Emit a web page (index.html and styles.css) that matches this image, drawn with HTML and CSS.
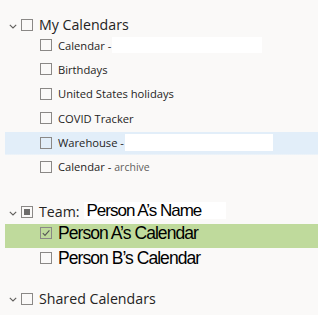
FILE: index.html
```html
<!DOCTYPE html>
<html>
<head>
<meta charset="utf-8">
<link rel="stylesheet" href="styles.css">
</head>
<body>
<div class="tree">
  <div class="group-row first">
    <svg class="chev" width="8" height="5" viewBox="0 0 8 5"><path d="M0.8 0.8 L4 4 L7.2 0.8" fill="none" stroke="#605e5c" stroke-width="1.1"/></svg>
    <span class="cb"></span>
    <span class="group-label">My Calendars</span>
  </div>
  <div class="items">
    <div class="item"><span class="cb"></span><span class="label">Calendar -</span><span class="mask mask-cal"></span></div>
    <div class="item"><span class="cb"></span><span class="label">Birthdays</span></div>
    <div class="item"><span class="cb"></span><span class="label">United States holidays</span></div>
    <div class="item"><span class="cb"></span><span class="label">COVID Tracker</span></div>
    <div class="item selected"><span class="cb"></span><span class="label">Warehouse -</span><span class="mask mask-wh"></span></div>
    <div class="item"><span class="cb"></span><span class="label">Calendar - <span class="sub">archive</span></span></div>
  </div>

  <div class="group-row team">
    <svg class="chev" width="8" height="5" viewBox="0 0 8 5"><path d="M0.8 0.8 L4 4 L7.2 0.8" fill="none" stroke="#605e5c" stroke-width="1.1"/></svg>
    <span class="cb partial"><span class="fill"></span></span>
    <span class="group-label">Team:</span>
    <span class="name-box">Person A’s Name</span>
  </div>
  <div class="person checked-row">
    <span class="cb"><svg width="10" height="10" viewBox="0 0 10 10"><path d="M1.8 5.2 L4 7.4 L8.4 2.4" fill="none" stroke="#555" stroke-width="1.1"/></svg></span>
    <span class="person-label">Person A’s Calendar</span>
  </div>
  <div class="person">
    <span class="cb"></span>
    <span class="person-label">Person B’s Calendar</span>
  </div>

  <div class="group-row shared">
    <svg class="chev" width="8" height="5" viewBox="0 0 8 5"><path d="M0.8 0.8 L4 4 L7.2 0.8" fill="none" stroke="#605e5c" stroke-width="1.1"/></svg>
    <span class="cb"></span>
    <span class="group-label">Shared Calendars</span>
  </div>
</div>
</body>
</html>
```
FILE: styles.css
```css
html, body {
  margin: 0;
  padding: 0;
  background: #faf9f8;
  width: 318px;
  height: 315px;
  overflow: hidden;
}
.tree {
  font-family: "Open Sans", "Noto Sans", sans-serif;
  color: #252423;
  display: flex;
  flex-direction: column;
}
.group-row {
  height: 16px;
  display: flex;
  align-items: center;
  padding-left: 9px;
}
.group-row.first { margin-top: 17px; }
.group-row.team { margin-top: 25.3px; }
.group-row.shared { margin-top: 23px; }
.chev {
  flex: none;
  margin-right: 4px;
  margin-top: 2px;
}
.cb {
  flex: none;
  width: 12px;
  height: 12px;
  box-sizing: border-box;
  border: 1px solid #8a8886;
  display: flex;
  align-items: center;
  justify-content: center;
}
.cb.partial .fill {
  width: 6px;
  height: 6px;
  background: #6e6d6c;
}
.group-label {
  margin-left: 6px;
  font-size: 14.2px;
  line-height: 16px;
  white-space: nowrap;
}
.items {
  margin-top: -0.2px;
  display: flex;
  flex-direction: column;
}
.item {
  height: 24.4px;
  margin-left: 5px;
  padding-left: 35px;
  display: flex;
  align-items: center;
  box-sizing: border-box;
}
.item.selected {
  background: linear-gradient(#e2eef9, #e2eef9) 0 1.2px / 100% calc(100% - 2.4px) no-repeat;
}
.label {
  margin-left: 6px;
  font-size: 11.2px;
  white-space: nowrap;
}
.sub {
  font-size: 10.5px;
  color: #605e5c;
}
.mask {
  background: #ffffff;
  flex: none;
}
.mask-cal {
  width: 150px;
  height: 16px;
  margin-left: 1px;
}
.mask-wh {
  width: 148px;
  height: 17px;
  margin-left: 1px;
}
.name-box {
  background: #ffffff;
  width: 142px;
  height: 17px;
  margin-left: 4px;
  margin-top: -4px;
  box-sizing: border-box;
  padding-left: 3px;
  font-family: "Liberation Sans", Arial, sans-serif;
  font-size: 17px;
  letter-spacing: -1px;
  line-height: 17px;
  color: #000;
  white-space: nowrap;
}
.person {
  margin-left: 5px;
  padding-left: 35px;
  display: flex;
  align-items: center;
  height: 20px;
}
.person.checked-row {
  margin-top: 3.5px;
  height: 24px;
  padding-bottom: 6px;
  box-sizing: border-box;
  background: #bfda9c;
}
.person-label {
  margin-left: 6px;
  font-family: "Liberation Sans", Arial, sans-serif;
  font-size: 17.5px;
  letter-spacing: -0.95px;
  color: #000;
  white-space: nowrap;
  line-height: 18px;
}
```
